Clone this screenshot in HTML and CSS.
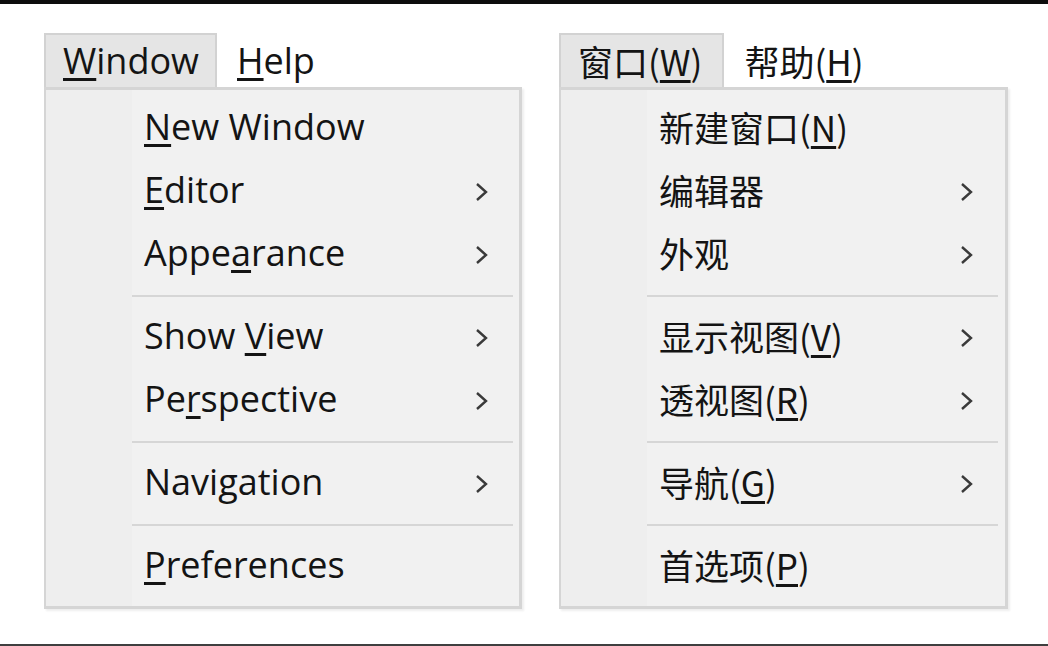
FILE: index.html
```html
<!DOCTYPE html>
<html lang="en">
<head>
<meta charset="utf-8">
<title>Window menu</title>
<link rel="stylesheet" href="styles.css">
</head>
<body>
<div class="topbar"></div>
<main class="stage">
  <section class="menu menu-en">
    <nav class="menubar">
      <span class="mb-item active"><u>W</u>indow</span>
      <span class="mb-item"><u>H</u>elp</span>
    </nav>
    <div class="dropdown">
      <div class="item"><span class="label"><u>N</u>ew Window</span></div>
      <div class="item"><span class="label"><u>E</u>ditor</span><svg class="arrow" viewBox="0 0 13 20"><polyline points="2,2 11,10 2,18"/></svg></div>
      <div class="item"><span class="label">Appe<u>a</u>rance</span><svg class="arrow" viewBox="0 0 13 20"><polyline points="2,2 11,10 2,18"/></svg></div>
      <div class="sep"></div>
      <div class="item"><span class="label">Show <u>V</u>iew</span><svg class="arrow" viewBox="0 0 13 20"><polyline points="2,2 11,10 2,18"/></svg></div>
      <div class="item"><span class="label">Pe<u>r</u>spective</span><svg class="arrow" viewBox="0 0 13 20"><polyline points="2,2 11,10 2,18"/></svg></div>
      <div class="sep"></div>
      <div class="item"><span class="label">Navi<u>g</u>ation</span><svg class="arrow" viewBox="0 0 13 20"><polyline points="2,2 11,10 2,18"/></svg></div>
      <div class="sep"></div>
      <div class="item"><span class="label"><u>P</u>references</span></div>
    </div>
  </section>
  <section class="menu menu-zh" lang="zh-CN">
    <nav class="menubar">
      <span class="mb-item active">窗口(<u>W</u>)</span>
      <span class="mb-item">帮助(<u>H</u>)</span>
    </nav>
    <div class="dropdown">
      <div class="item"><span class="label">新建窗口(<u>N</u>)</span></div>
      <div class="item"><span class="label">编辑器</span><svg class="arrow" viewBox="0 0 13 20"><polyline points="2,2 11,10 2,18"/></svg></div>
      <div class="item"><span class="label">外观</span><svg class="arrow" viewBox="0 0 13 20"><polyline points="2,2 11,10 2,18"/></svg></div>
      <div class="sep"></div>
      <div class="item"><span class="label">显示视图(<u>V</u>)</span><svg class="arrow" viewBox="0 0 13 20"><polyline points="2,2 11,10 2,18"/></svg></div>
      <div class="item"><span class="label">透视图(<u>R</u>)</span><svg class="arrow" viewBox="0 0 13 20"><polyline points="2,2 11,10 2,18"/></svg></div>
      <div class="sep"></div>
      <div class="item"><span class="label">导航(<u>G</u>)</span><svg class="arrow" viewBox="0 0 13 20"><polyline points="2,2 11,10 2,18"/></svg></div>
      <div class="sep"></div>
      <div class="item"><span class="label">首选项(<u>P</u>)</span></div>
    </div>
  </section>
</main>
<div class="bottomline"></div>
</body>
</html>
```

FILE: styles.css
```css
* { box-sizing: border-box; }

html, body {
  margin: 0;
  padding: 0;
  background: #ffffff;
  width: 1048px;
  height: 646px;
  overflow: hidden;
}

body {
  font-family: "Open Sans", "Noto Sans", sans-serif;
  color: #141414;
}

.topbar {
  height: 4px;
  background: #0d0d0d;
}

.stage {
  height: 640px;
  display: flex;
  align-items: flex-start;
  gap: 37px;
  padding: 29px 0 0 44px;
}

.menu-en {
  width: 478px;
  font-family: "Open Sans", "Noto Sans", sans-serif;
  font-size: 36px;
}

.menu-zh {
  width: 449px;
  font-family: "Noto Sans CJK SC", "Noto Sans", sans-serif;
  font-size: 35px;
}

.menubar {
  display: flex;
  height: 54px;
}

.mb-item {
  display: flex;
  align-items: center;
  padding: 0 18px;
  line-height: 1.2;
  border: 2px solid transparent;
  border-bottom: none;
}

.mb-item.active {
  background: #e5e5e5;
  border-color: #d2d2d2;
  padding: 0 16px 0 17px;
}

.menu-zh .mb-item.active {
  padding: 0 20px 0 17px;
}

.menu-zh .mb-item + .mb-item {
  padding-left: 18px;
}

u {
  text-decoration: underline;
  text-decoration-thickness: 3px;
  text-underline-offset: 4px;
}

.dropdown {
  border: 3px solid #d5d5d5;
  border-left-width: 2px;
  background: linear-gradient(to right, #eeeeee 0, #eeeeee 86px, #f1f1f1 86px);
  padding: 7px 0 8px;
  box-shadow: 2px 2px 2px rgba(0, 0, 0, 0.07);
}

.item {
  height: 63px;
  display: flex;
  align-items: center;
  padding-left: 98px;
  padding-right: 31px;
}

.label {
  flex: 1;
  line-height: 1.2;
  white-space: nowrap;
  padding-bottom: 3px;
}

.arrow {
  width: 13px;
  height: 20px;
  flex: none;
}

.arrow polyline {
  fill: none;
  stroke: #3a3a3a;
  stroke-width: 2.4;
}

.sep {
  height: 20px;
  margin: 0 6px 0 86px;
  display: flex;
  align-items: center;
}

.sep::before {
  content: "";
  display: block;
  width: 100%;
  height: 2px;
  background: #d6d6d6;
}

.menu-zh .item {
  padding-left: 98px;
  padding-right: 32px;
}

.menu-zh .sep {
  margin-right: 7px;
}

.bottomline {
  height: 2px;
  background: #3f3f3f;
}
```
